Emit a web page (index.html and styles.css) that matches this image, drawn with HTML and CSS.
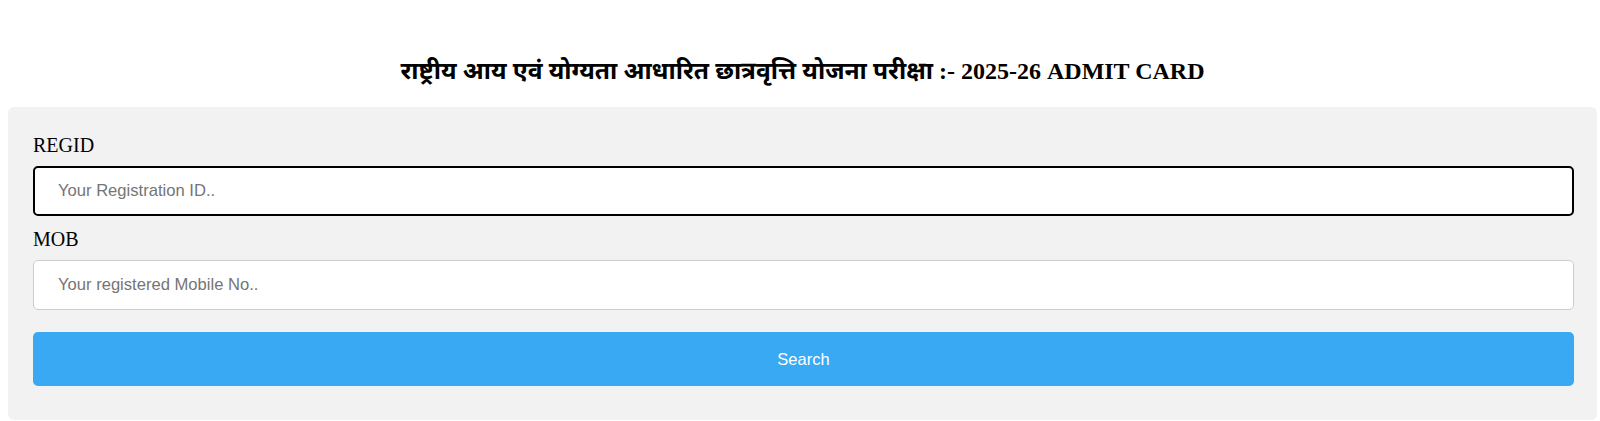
FILE: index.html
```
<!DOCTYPE html>
<html lang="hi">
<head>
<meta charset="utf-8">
<title>Admit Card</title>
<link rel="stylesheet" href="styles.css">
</head>
<body>
<div class="page">
  <h2 class="title"><span class="hi">राष्ट्रीय आय एवं योग्यता आधारित छात्रवृत्ति योजना परीक्षा</span> :- 2025-26 ADMIT CARD</h2>
  <form class="panel">
    <label class="lbl" for="regid">REGID</label>
    <input class="field field-focus" id="regid" type="text" placeholder="Your Registration ID..">
    <label class="lbl" for="mob">MOB</label>
    <input class="field" id="mob" type="text" placeholder="Your registered Mobile No..">
    <button class="btn" type="button">Search</button>
  </form>
</div>
</body>
</html>
```
FILE: styles.css
```
html, body {
  margin: 0;
  padding: 0;
  background: #ffffff;
}
.page {
  padding: 0 3px 0 8px;
  font-family: "Liberation Serif", "Noto Sans Devanagari", "Noto Serif Devanagari", serif;
}
.title {
  margin: 0;
  padding-top: 57px;
  height: 28px;
  line-height: 28px;
  margin-bottom: 22px;
  text-align: center;
  font-size: 24px;
  font-weight: bold;
  color: #000;
}
.hi {
  font-size: 24.6px;
}
.panel {
  display: flex;
  flex-direction: column;
  background: #f2f2f2;
  border-radius: 6px;
  padding: 26px 23px 34px 25px;
}
.lbl {
  display: block;
  font-family: "Liberation Serif", serif;
  font-size: 20px;
  line-height: 24px;
  height: 24px;
  color: #000;
}
.field {
  box-sizing: border-box;
  width: 100%;
  height: 50px;
  margin: 9px 0 11px;
  padding: 0 24px;
  border: 1px solid #cccccc;
  border-radius: 5px;
  background: #fff;
  font-family: "Liberation Sans", Arial, sans-serif;
  font-size: 16.6px;
  color: #000;
  outline: none;
}
.field::placeholder {
  color: #757575;
}
.field-focus {
  border: 2px solid #000;
  padding-left: 23px;
}
#mob {
  margin-bottom: 22px;
}
.btn {
  box-sizing: border-box;
  width: 100%;
  height: 54px;
  border: none;
  border-radius: 5px;
  background: #39a9f4;
  color: #fff;
  font-family: "Liberation Sans", Arial, sans-serif;
  font-size: 16.5px;
  cursor: pointer;
}
```
